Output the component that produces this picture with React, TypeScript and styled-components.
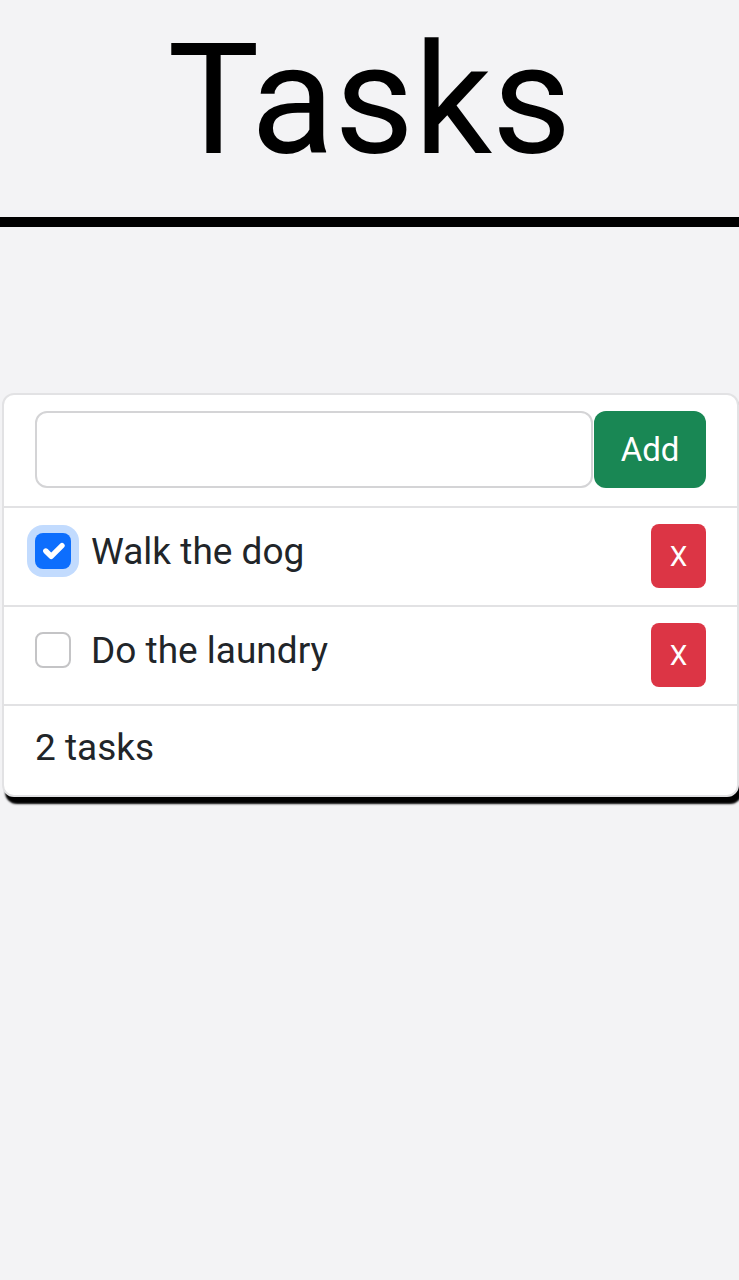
import styled, { createGlobalStyle } from "styled-components"

const tasks = [
  { id: 1, title: "Walk the dog", done: true },
  { id: 2, title: "Do the laundry", done: false },
]

const App = () => {
  return (
    <Page>
      <GlobalStyle />
      <Title>Tasks</Title>
      <Card>
        <NewRow>
          <TaskInput type="text" />
          <AddButton>Add</AddButton>
        </NewRow>
        {tasks.map((t) => (
          <TaskRow key={t.id}>
            <CheckGroup>
              <Check checked={t.done}>
                {t.done && (
                  <svg width="36" height="36" viewBox="0 0 20 20">
                    <path
                      d="m6 10 3 3 6-6"
                      fill="none"
                      stroke="#fff"
                      strokeWidth="3"
                      strokeLinecap="round"
                      strokeLinejoin="round"
                    />
                  </svg>
                )}
              </Check>
              <TaskLabel>{t.title}</TaskLabel>
            </CheckGroup>
            <DeleteButton>X</DeleteButton>
          </TaskRow>
        ))}
        <Footer>{tasks.length} tasks</Footer>
      </Card>
    </Page>
  )
}

export default App

const GlobalStyle = createGlobalStyle`
body{
  margin: 0;
  background-color: #f3f3f5;
  font-family: Roboto, "Liberation Sans", sans-serif;
  color: #212529;
}
`
const Page = styled.div`
min-height: 1280px;
background-color: #f3f3f5;
`
const Title = styled.h1`
margin: 0;
padding: 10px 0 26px;
font-size: 154px;
font-weight: 400;
line-height: normal;
text-align: center;
color: #000;
border-bottom: 10px solid #000;
`
const Card = styled.div`
margin: 166px 0 0 2px;
width: 737px;
box-sizing: border-box;
background-color: white;
border: 2px solid #e2e2e4;
border-radius: 12px;
box-shadow: 3px 7px 2px #000;
overflow: hidden;
`
const NewRow = styled.div`
display: flex;
gap: 1px;
padding: 16px 31px 18px 31px;
`
const TaskInput = styled.input`
flex: 1;
height: 77px;
box-sizing: border-box;
border: 2px solid #d4d4d6;
border-radius: 12px;
font-size: 32px;
font-family: inherit;
outline: none;
`
const AddButton = styled.button`
width: 112px;
height: 77px;
border: none;
border-radius: 12px;
background-color: #198754;
color: white;
font-size: 33px;
font-family: inherit;
`
const TaskRow = styled.div`
display: flex;
align-items: center;
padding: 16px 31px 17px 31px;
border-top: 2px solid #e2e2e4;
`
const CheckGroup = styled.div`
flex: 1;
display: flex;
align-items: center;
gap: 20px;
padding-bottom: 10px;
`
const Check = styled.span<{ checked: boolean }>`
flex: none;
width: 36px;
height: 36px;
box-sizing: border-box;
border-radius: 8px;
border: ${(p) => (p.checked ? "none" : "2px solid #c4c4c6")};
background-color: ${(p) => (p.checked ? "#0d6efd" : "white")};
box-shadow: ${(p) => (p.checked ? "0 0 0 8px rgba(13,110,253,0.25)" : "none")};
display: flex;
`
const TaskLabel = styled.span`
font-size: 37px;
`
const DeleteButton = styled.button`
width: 55px;
height: 64px;
border: none;
border-radius: 8px;
background-color: #dc3545;
color: white;
font-size: 28px;
font-family: inherit;
`
const Footer = styled.div`
padding: 15px 31px 20px;
font-size: 37px;
line-height: 54px;
border-top: 2px solid #e2e2e4;
`
